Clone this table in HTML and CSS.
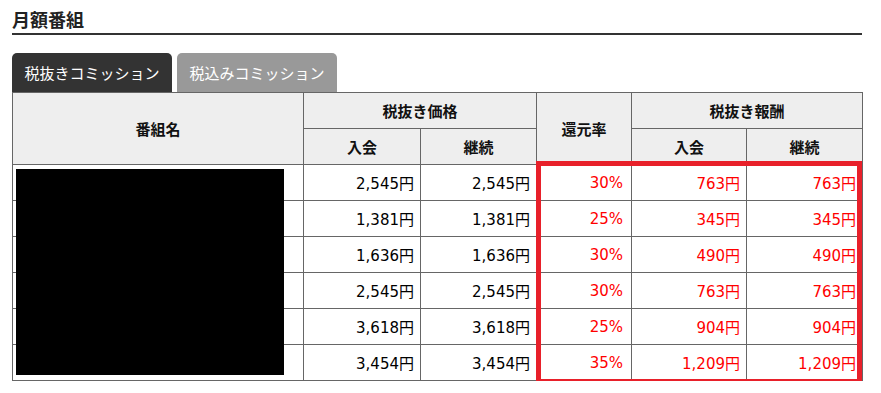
FILE: index.html
```html
<!DOCTYPE html>
<html lang="ja">
<head>
<meta charset="utf-8">
<title>月額番組</title>
<link rel="stylesheet" href="styles.css">
</head>
<body>
<div class="page">
  <h2 class="title">月額番組</h2>
  <div class="tabs">
    <div class="tab active">税抜きコミッション</div>
    <div class="tab">税込みコミッション</div>
  </div>
  <div class="table-wrap">
    <table class="prices">
      <colgroup>
        <col class="c-name"><col class="c-p1"><col class="c-p2"><col class="c-rate"><col class="c-r1"><col class="c-r2">
      </colgroup>
      <thead>
        <tr>
          <th rowspan="2">番組名</th>
          <th colspan="2">税抜き価格</th>
          <th rowspan="2">還元率</th>
          <th colspan="2">税抜き報酬</th>
        </tr>
        <tr>
          <th>入会</th><th>継続</th><th>入会</th><th>継続</th>
        </tr>
      </thead>
      <tbody>
        <tr><td></td><td>2,545円</td><td>2,545円</td><td class="red rate">30%</td><td class="red">763円</td><td class="red">763円</td></tr>
        <tr><td></td><td>1,381円</td><td>1,381円</td><td class="red rate">25%</td><td class="red">345円</td><td class="red">345円</td></tr>
        <tr><td></td><td>1,636円</td><td>1,636円</td><td class="red rate">30%</td><td class="red">490円</td><td class="red">490円</td></tr>
        <tr><td></td><td>2,545円</td><td>2,545円</td><td class="red rate">30%</td><td class="red">763円</td><td class="red">763円</td></tr>
        <tr><td></td><td>3,618円</td><td>3,618円</td><td class="red rate">25%</td><td class="red">904円</td><td class="red">904円</td></tr>
        <tr><td></td><td>3,454円</td><td>3,454円</td><td class="red rate">35%</td><td class="red">1,209円</td><td class="red">1,209円</td></tr>
      </tbody>
    </table>
    <div class="redact"></div>
    <div class="highlight"></div>
  </div>
</div>
</body>
</html>
```

FILE: styles.css
```css
html, body {
  margin: 0;
  padding: 0;
  background: #fff;
}
body {
  font-family: "DejaVu Sans", "Noto Sans CJK JP", sans-serif;
  color: #000;
}
.page {
  width: 850px;
  padding: 0 12px;
}
.title {
  margin: 0;
  padding: 7px 0 2px;
  font-family: "Noto Sans CJK JP", sans-serif;
  font-size: 18px;
  line-height: 24px;
  font-weight: bold;
  color: #222;
  border-bottom: 2px solid #333;
}
.tabs {
  display: flex;
  gap: 5px;
  margin-top: 18px;
}
.tab {
  width: 160px;
  height: 39px;
  box-sizing: border-box;
  display: flex;
  align-items: center;
  justify-content: center;
  border-radius: 5px 5px 0 0;
  background: #999;
  color: #fff;
  font-family: "Noto Sans CJK JP", sans-serif;
  font-size: 15px;
}
.tab.active {
  background: #333;
}
.table-wrap {
  position: relative;
}
.prices {
  width: 850px;
  border-collapse: collapse;
  table-layout: fixed;
}
.c-name { width: 291px; }
.c-p1 { width: 117px; }
.c-p2 { width: 116px; }
.c-rate { width: 95px; }
.c-r1 { width: 115px; }
.c-r2 { width: 116px; }
.prices th, .prices td {
  border: 1px solid #666;
  height: 36px;
  box-sizing: border-box;
  padding: 0 6px;
  font-size: 15px;
}
.prices th {
  background: #eee;
  font-family: "Noto Sans CJK JP", sans-serif;
  font-weight: bold;
  text-align: center;
  color: #111;
}
.prices td {
  text-align: right;
  color: #000;
}
.prices td.red {
  color: #f00;
}
.prices td.rate {
  padding-right: 8px;
}
.redact {
  position: absolute;
  left: 4px;
  top: 77px;
  width: 268px;
  height: 206px;
  background: #000;
}
.highlight {
  position: absolute;
  left: 524px;
  top: 69px;
  width: 326px;
  height: 223px;
  box-sizing: border-box;
  border: 5px solid #e8202a;
}
```
